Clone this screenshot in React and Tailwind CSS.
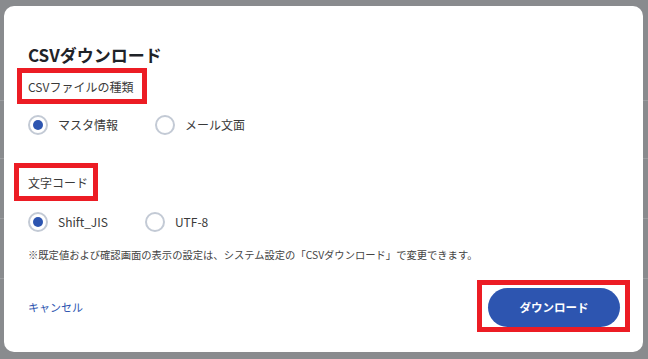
import { useState } from "react";

const jp = "font-['Noto_Sans_CJK_JP','Noto_Sans',sans-serif]";

function Radio({ label, checked, onClick }) {
    return (
        <button type="button" onClick={onClick} className="flex items-center gap-[10px]">
            <span className="flex h-[20px] w-[20px] items-center justify-center rounded-full border-2 border-[#c3cad5] bg-white">
                {checked && <span className="h-[10px] w-[10px] rounded-full bg-[#2d55b0]" />}
            </span>
            <span className="text-[12px] leading-[20px] text-[#3a3a3a]">{label}</span>
        </button>
    );
}

export default function App() {
    const [fileType, setFileType] = useState("master");
    const [encoding, setEncoding] = useState("sjis");

    return (
        <div className={`relative h-[359px] w-[648px] overflow-hidden bg-[#898b8e] ${jp}`}>
            {/* page behind the modal */}
            <div className="pt-[100px]">
                <div className="h-[58px] border-t border-[#9a9c9f]" />
                <div className="h-[60px] border-t border-[#9a9c9f]" />
                <div className="h-[60px] border-t border-[#9a9c9f]" />
                <div className="border-t border-[#9a9c9f]" />
            </div>

            <div className="absolute left-[4px] top-[6px] flex h-[346px] w-[639px] flex-col rounded-[10px] bg-white pl-[24px] pr-[23px] pt-[35px]">
                <h1 className="h-[28px] text-[17px] font-bold leading-[28px] text-[#1f2328]">CSVダウンロード</h1>

                <p className="mt-[6px] h-[24px] text-[12px] leading-[24px] text-[#3a3a3a]">CSVファイルの種類</p>
                <div className="mt-[14px] flex h-[24px] items-center gap-[37px]">
                    <Radio label="マスタ情報" checked={fileType === "master"} onClick={() => setFileType("master")} />
                    <Radio label="メール文面" checked={fileType === "mail"} onClick={() => setFileType("mail")} />
                </div>

                <p className="mt-[34px] h-[24px] text-[12px] leading-[24px] text-[#3a3a3a]">文字コード</p>
                <div className="mt-[15px] flex h-[24px] items-center gap-[37px]">
                    <Radio label="Shift_JIS" checked={encoding === "sjis"} onClick={() => setEncoding("sjis")} />
                    <Radio label="UTF-8" checked={encoding === "utf8"} onClick={() => setEncoding("utf8")} />
                </div>

                <p className="mt-[11px] h-[20px] whitespace-nowrap text-[10.3px] leading-[20px] text-[#444]">
                    ※既定値および確認画面の表示の設定は、システム設定の「CSVダウンロード」で変更できます。
                </p>

                <div className="mt-[23px] flex items-center justify-between">
                    <button className="text-[11px] text-[#2d55b0]">キャンセル</button>
                    <button className="h-[39px] w-[132px] rounded-full bg-[#2d55b0] text-[11.5px] font-bold text-white">ダウンロード</button>
                </div>

                {/* red annotation boxes */}
                <div className="pointer-events-none absolute left-[13px] top-[62px] h-[36px] w-[130px] border-[5px] border-[#ec1c24]" />
                <div className="pointer-events-none absolute left-[10px] top-[157px] h-[38px] w-[84px] border-[5px] border-[#ec1c24]" />
                <div className="pointer-events-none absolute left-[473px] top-[274px] h-[52px] w-[153px] border-[5px] border-[#ec1c24]" />
            </div>
        </div>
    );
}
